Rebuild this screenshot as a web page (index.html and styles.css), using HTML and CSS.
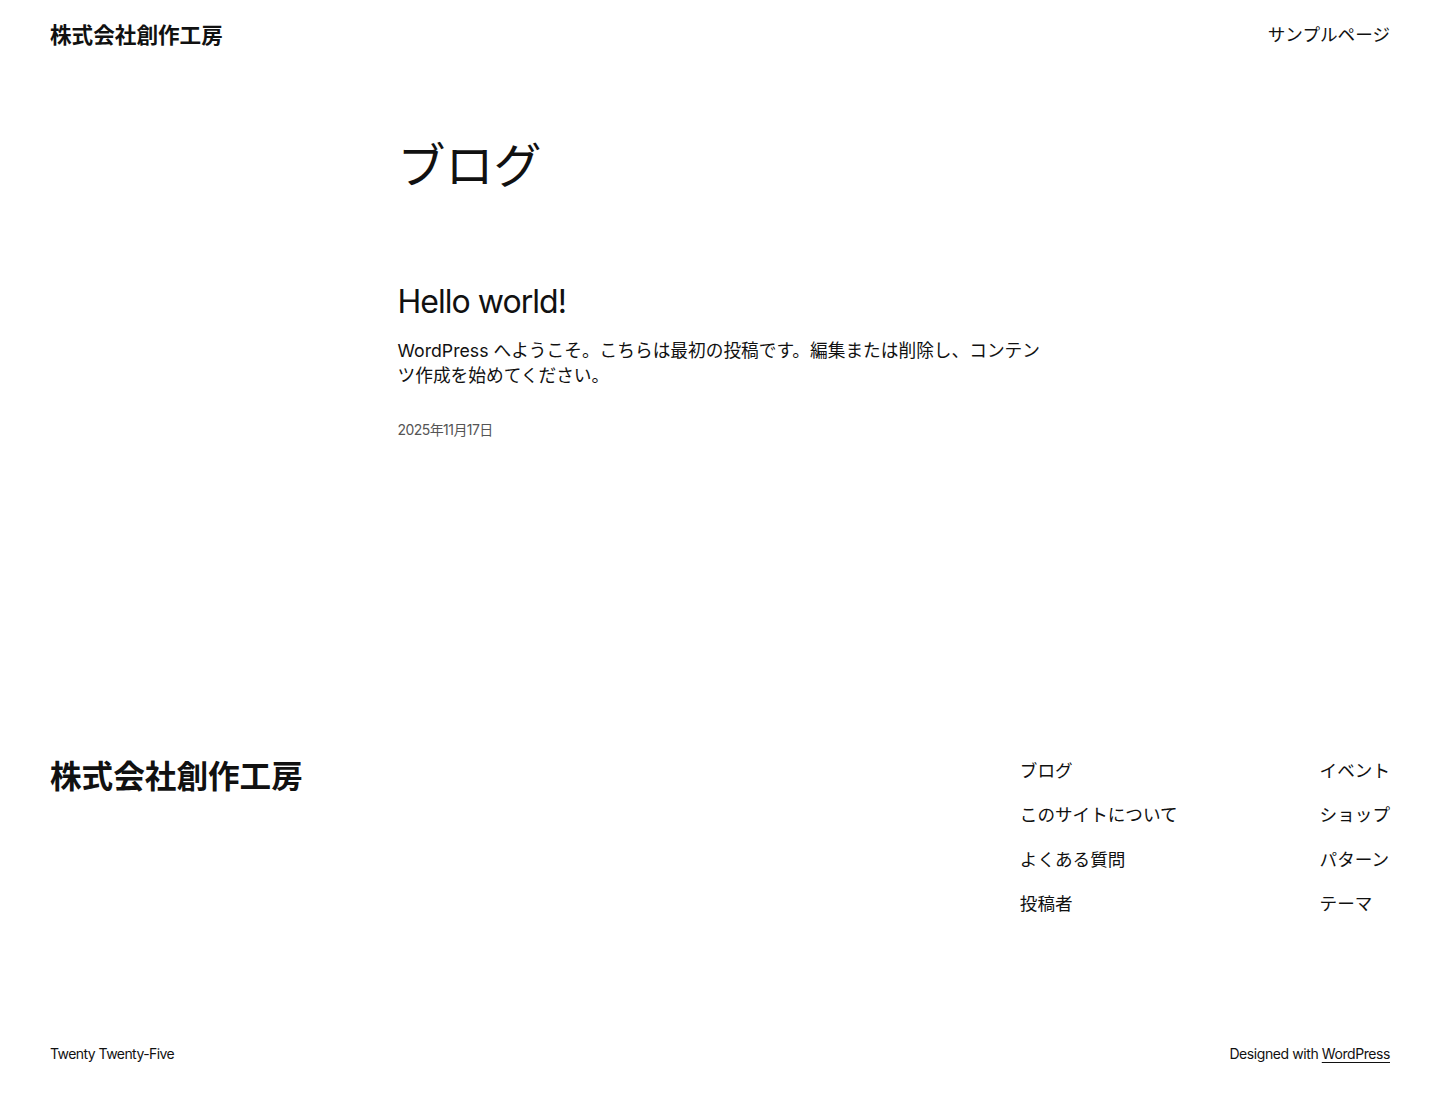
FILE: index.html
```html
<html>
<head>
    <meta charset="utf-8">
    <title>ブログ – 株式会社創作工房</title>
    <link rel="stylesheet" href="styles.css">
</head>
<body>
    <header class="site-header">
        <a class="site-title" href="#">株式会社創作工房</a>
        <nav class="header-nav">
            <a href="#">サンプルページ</a>
        </nav>
    </header>

    <main class="content">
        <h1 class="page-title">ブログ</h1>
        <article class="post">
            <h2 class="post-title"><a href="#">Hello world!</a></h2>
            <p class="post-excerpt">WordPress へようこそ。こちらは最初の投稿です。編集または削除し、コンテンツ作成を始めてください。</p>
            <div class="post-date">2025年11月17日</div>
        </article>
    </main>

    <footer class="site-footer">
        <div class="footer-top">
            <a class="footer-title" href="#">株式会社創作工房</a>
            <div class="footer-menus">
                <nav class="footer-nav">
                    <a href="#">ブログ</a>
                    <a href="#">このサイトについて</a>
                    <a href="#">よくある質問</a>
                    <a href="#">投稿者</a>
                </nav>
                <nav class="footer-nav">
                    <a href="#">イベント</a>
                    <a href="#">ショップ</a>
                    <a href="#">パターン</a>
                    <a href="#">テーマ</a>
                </nav>
            </div>
        </div>
        <div class="footer-bottom">
            <span class="credit-left">Twenty Twenty-Five</span>
            <span class="credit-right">Designed with <a href="#">WordPress</a></span>
        </div>
    </footer>
</body>
</html>
```

FILE: styles.css
```css
body {
    margin: 0;
    padding: 0;
    background-color: #ffffff;
    color: #111111;
    font-family: Inter, "Noto Sans CJK JP", sans-serif;
    font-size: 17.6px;
    line-height: 1.4;
}
a {
    color: inherit;
    text-decoration: none;
}
.site-header {
    display: flex;
    justify-content: space-between;
    align-items: center;
    height: 70px;
    padding: 0 50px;
}
.site-title {
    font-size: 21.6px;
    font-weight: 700;
}
.header-nav {
    font-size: 17.6px;
}
.content {
    width: 645px;
    margin: 0 auto;
    padding-top: 67px;
}
.page-title {
    margin: 0;
    font-size: 48px;
    font-weight: 400;
    line-height: 1.2;
}
.post {
    margin-top: 88px;
}
.post-title {
    margin: 0;
    font-size: 32px;
    font-weight: 400;
    line-height: 1.2;
    letter-spacing: -0.03em;
}
.post-excerpt {
    margin: 17px 0 0;
    font-size: 17.7px;
    line-height: 25px;
}
.post-date {
    margin-top: 32px;
    font-size: 14px;
    color: #555555;
    letter-spacing: -0.04em;
}
.site-footer {
    padding: 318px 50px 50px;
}
.footer-top {
    display: flex;
    justify-content: space-between;
    align-items: flex-start;
}
.footer-title {
    font-size: 31.6px;
    font-weight: 700;
    line-height: 1.2;
}
.footer-menus {
    display: flex;
    gap: 142px;
}
.footer-nav {
    display: flex;
    flex-direction: column;
    gap: 19.5px;
    line-height: 25px;
}
.footer-bottom {
    display: flex;
    justify-content: space-between;
    margin-top: 128px;
    font-size: 14px;
}
.credit-left {
    letter-spacing: -0.04em;
}
.credit-right {
    letter-spacing: -0.03em;
}
.footer-bottom a {
    text-decoration: underline;
    text-underline-offset: 3px;
}
```
